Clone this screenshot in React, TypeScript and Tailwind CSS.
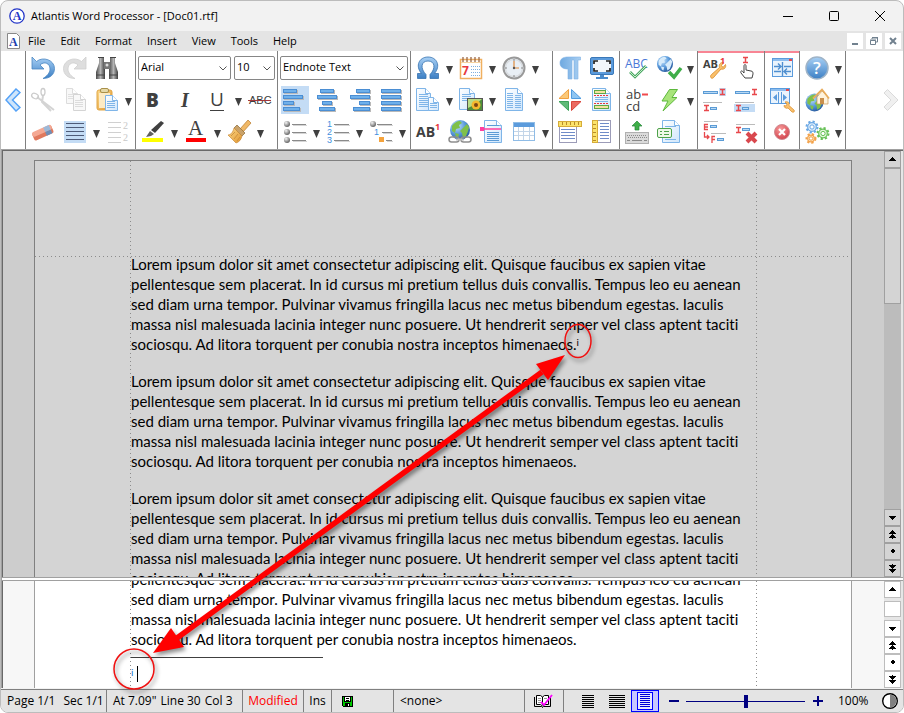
import type { ReactNode } from 'react';

const Icon = ({ children }: { children: ReactNode }) => (
  <svg viewBox="0 0 24 24" className="size-6 shrink-0 overflow-visible" fill="none" aria-hidden="true">
    {children}
  </svg>
);

// Shared gradients, referenced by id from the toolbar icons
const Gradients = () => (
  <svg className="absolute size-0" aria-hidden="true">
    <defs>
      <linearGradient id="blue" x1="0" y1="0" x2="0" y2="1">
        <stop offset="0" stopColor="#a8d0f5" />
        <stop offset="1" stopColor="#3c7fc4" />
      </linearGradient>
      <linearGradient id="sky" x1="0" y1="0" x2="1" y2="0">
        <stop offset="0" stopColor="#6fa9e0" />
        <stop offset="1" stopColor="#a9cff2" />
      </linearGradient>
      <linearGradient id="paper" x1="0" y1="0" x2="1" y2="1">
        <stop offset="0" stopColor="#ffffff" />
        <stop offset="1" stopColor="#cfe6fc" />
      </linearGradient>
      <linearGradient id="dark" x1="0" y1="0" x2="1" y2="0">
        <stop offset="0" stopColor="#4a4a4a" />
        <stop offset="0.5" stopColor="#b5b5b5" />
        <stop offset="1" stopColor="#3e3e3e" />
      </linearGradient>
      <linearGradient id="gold" x1="0" y1="0" x2="1" y2="1">
        <stop offset="0" stopColor="#fbd98a" />
        <stop offset="1" stopColor="#e2962f" />
      </linearGradient>
      <radialGradient id="globe" cx="0.35" cy="0.3" r="0.8">
        <stop offset="0" stopColor="#c7e4fb" />
        <stop offset="0.5" stopColor="#5b9bdc" />
        <stop offset="1" stopColor="#1f4f93" />
      </radialGradient>
      <radialGradient id="ball" cx="0.35" cy="0.3" r="0.7">
        <stop offset="0" stopColor="#f4f4f4" />
        <stop offset="1" stopColor="#666666" />
      </radialGradient>
      <radialGradient id="stop" cx="0.4" cy="0.3" r="0.8">
        <stop offset="0" stopColor="#f79a9a" />
        <stop offset="1" stopColor="#cf3a44" />
      </radialGradient>
    </defs>
  </svg>
);

const Tool = ({ label, active, children }: { label: string; active?: boolean; children: ReactNode }) => (
  <button type="button" aria-label={label} className="flex size-8 shrink-0 items-center justify-center">
    <span className={active ? 'flex size-7 items-center justify-center bg-[#c4dcf5]' : 'flex items-center justify-center'}>
      <Icon>{children}</Icon>
    </span>
  </button>
);

const More = ({ label }: { label: string }) => (
  <button type="button" aria-label={label} className="flex h-8 w-[11px] shrink-0 items-center justify-center">
    <svg viewBox="0 0 7 8" className="mt-1 h-2 w-[7px]" aria-hidden="true">
      <path d="M0 0h7L3.5 8z" fill="#404040" />
    </svg>
  </button>
);

const Group = ({ hot, children }: { hot?: boolean; children: ReactNode }) => (
  <div
    className={
      hot
        ? 'flex flex-col border-l border-[#808080] px-px py-px shadow-[inset_0_2px_0_#f88594]'
        : 'flex flex-col border-l border-[#808080] px-px py-px'
    }
  >
    {children}
  </div>
);

const Row = ({ children }: { children: ReactNode }) => <div className="flex h-8 items-center">{children}</div>;

const Combo = ({ label, value, className }: { label: string; value: string; className: string }) => (
  <label className={`relative flex h-6 ${className}`}>
    <select
      aria-label={label}
      className="w-full appearance-none rounded-[2px] border border-[#868686] bg-white pr-4 pl-[2px] text-[11px] text-black"
    >
      <option>{value}</option>
    </select>
    <svg viewBox="0 0 8 5" className="pointer-events-none absolute top-[10px] right-1 h-[5px] w-2" fill="none" aria-hidden="true">
      <path d="M0.5 0.5L4 4l3.5-3.5" stroke="#555" />
    </svg>
  </label>
);

/* ---------- icon drawings ---------- */

const Undo = ({ fill, stroke }: { fill: string; stroke: string }) => (
  <path d="M1 1v12h12l-4-4c4-4 10-2 10 4 0 4-3 7-7 9.5 7 0 11.5-4 11.5-10C23.5 4 12 0 5.5 5.5z" fill={fill} stroke={stroke} strokeWidth="0.8" />
);

const Sheet = ({ x = 1, y = 1, w = 16, h = 22, fill = 'url(#paper)', stroke = '#7fb5e8' }) => (
  <>
    <path d={`M${x} ${y}h${w - 5}l5 5v${h - 5}h-${w}z`} fill={fill} stroke={stroke} />
    <path d={`M${x + w - 5} ${y}v5h5`} fill="#fff" stroke={stroke} />
  </>
);

const Rules = ({ x, w, ys, color = '#7fb5e8' }: { x: number; w: number; ys: number[]; color?: string }) => (
  <path d={ys.map((y) => `M${x} ${y}h${w}`).join('')} stroke={color} />
);

const AlignBars = ({ bars }: { bars: [number, number][] }) => (
  <>
    {bars.map(([x, w], i) => (
      <g key={i}>
        <rect x={x + 1} y={i * 6 + 2} width={w} height="4" fill="#b9b9b9" />
        <rect x={x + 0.5} y={i * 6 + 1.5} width={w - 1} height="3" fill="#6fb0ea" stroke="#4b8ed3" />
      </g>
    ))}
  </>
);

const Globe = ({ x = 12, y = 12, r = 10, land = '#7fc04a' }) => (
  <g transform={`translate(${x} ${y}) scale(${r / 10})`}>
    <circle r="10" fill="url(#globe)" />
    <path d="M-8-4c2-3 5-5 8-5l2 2-3 2 1 3-4 1-1 4-3-2z" fill={land} />
    <path d="M3-2l4-4 2 3-1 4-2 5-3 2-1-5-2-2z" fill={land} />
    <path d="M-5 3l4 1-1 4-2-1z" fill={land} />
  </g>
);

const ListRule = ({ x, y }: { x: number; y: number }) => (
  <>
    <path d={`M${x} ${y + 0.5}H23`} stroke="#8a8a8a" />
    <path d={`M${x + 1} ${y + 1.5}H24`} stroke="#d5d5d5" />
  </>
);

const FieldBar = ({ x, y, w }: { x: number; y: number; w: number }) => (
  <rect x={x + 0.5} y={y + 0.5} width={w} height="2" fill="#b8d9f5" stroke="#5b9bd5" />
);

// Serif-style insertion mark used by the note icons
const Mark = ({ x, y }: { x: number; y: number }) => (
  <path d={`M${x} ${y + 0.5}h5m-5 5h5m-2.5-5v5`} stroke="#e8484c" strokeWidth="1.5" />
);

const Wrench = () => (
  <path
    d="M22.5 8.500c1 3-1.500 5.500-4.500 4.500l-7 8c-2 3-5 0-2.500-2.500l8-7c-1-3 1-5.500 4-5l-2 3 1.500 2z"
    fill="#f9c06c"
    stroke="#d98a28"
    strokeWidth="0.8"
  />
);

const Gear = ({ x, y, r, color, fill }: { x: number; y: number; r: number; color: string; fill: string }) => (
  <>
    <circle cx={x} cy={y} r={r} stroke={color} strokeWidth="2" strokeDasharray="2.2 2.1" />
    <circle cx={x} cy={y} r={r - 1.2} fill={fill} stroke={color} strokeWidth="1.2" />
    <circle cx={x} cy={y} r={r / 2.6} fill="#fff" stroke={color} />
  </>
);

/* ---------- toolbar ---------- */

const Toolbar = () => (
  <div className="flex shrink-0 border-b border-[#a0a0a0] bg-white">
    <button type="button" aria-label="Scroll toolbar left" className="flex w-6 items-center justify-center">
      <svg viewBox="0 0 16 24" className="h-6 w-4" aria-hidden="true">
        <path d="M11 1l4 3.500L7.500 12l7.500 7.500-4 3.500L1 12z" fill="#cfe5fb" stroke="#55a2f7" strokeWidth="1.5" />
      </svg>
    </button>

    <Group>
      <Row>
        <Tool label="Undo">
          <Undo fill="url(#blue)" stroke="#4a86c2" />
        </Tool>
        <Tool label="Redo">
          <g transform="matrix(-1 0 0 1 24 0)">
            <Undo fill="#dedede" stroke="#cfcfcf" />
          </g>
        </Tool>
        <Tool label="Find">
          <path d="M4 2h5v4l1 2v15H1v-7L4 7z" fill="url(#dark)" />
          <path d="M15 2h5v5l3 9v7h-9V8l1-2z" fill="url(#dark)" />
          <rect x="9" y="6" width="6" height="7" fill="#777" />
          <circle cx="12" cy="9" r="1.5" fill="#ddd" />
          <path d="M3 1.500h6M15 1.500h6M1 19h9M14 19h9" stroke="#444" />
        </Tool>
      </Row>
      <Row>
        <Tool label="Cut">
          <path d="M6 9l17 13M12 8l-1 6 9 9" stroke="#d4d4d4" strokeWidth="2" />
          <ellipse cx="4" cy="8" rx="3.500" ry="2.500" stroke="#cccccc" strokeWidth="1.3" transform="rotate(25 4 8)" />
          <ellipse cx="12" cy="4" rx="2" ry="3.500" stroke="#cccccc" strokeWidth="1.3" />
        </Tool>
        <Tool label="Copy">
          <Sheet x={3.5} y={0.5} w={11} h={15} fill="#f8f8f8" stroke="#dcdcdc" />
          <Rules x={5} w={7} ys={[6.5, 8.5, 10.5]} color="#e0e0e0" />
          <Sheet x={10.5} y={6.5} w={12} h={16} fill="#f8f8f8" stroke="#d4d4d4" />
          <Rules x={12} w={8} ys={[12.5, 14.5, 16.5, 18.5]} color="#dcdcdc" />
        </Tool>
        <Tool label="Paste">
          <rect x="2" y="2" width="15" height="20" rx="2" fill="url(#gold)" stroke="#e0a545" />
          <rect x="4" y="5" width="11" height="15" fill="#fdebc4" />
          <rect x="5.5" y="0.5" width="8" height="4" rx="1.5" fill="#e6d9a8" stroke="#a8904a" />
          <Sheet x={10.5} y={7.5} w={12} h={15} />
          <Rules x={12} w={8} ys={[13.5, 15.5, 17.5, 19.5]} />
        </Tool>
        <More label="Paste options" />
      </Row>
      <Row>
        <Tool label="Clear formatting">
          <g transform="rotate(-24 12 12)">
            <rect x="1" y="9" width="21" height="8" rx="2" fill="#e0795e" />
            <rect x="1" y="8" width="21" height="5" rx="2" fill="#f4a893" />
            <rect x="14" y="8" width="6" height="5" fill="#9db9d8" />
            <rect x="14" y="13" width="6" height="4" fill="#6f8fb8" />
          </g>
        </Tool>
        <Tool label="Paragraph">
          <rect x="1" y="1" width="22" height="22" fill="#c4dcf5" />
          <path d="M3 3.500h18M3 7.500h18M3 11.500h18M3 15.500h18M3 19.500h18" stroke="#4e5b78" />
        </Tool>
        <More label="Paragraph options" />
        <Tool label="Line numbers">
          <path d="M2 2.500h13M2 7.500h13M2 12.500h13M2 17.500h13M2 22.500h13" stroke="#d0d0d0" />
          <text x="17" y="9" fontSize="10" fill="#c8c8c8" fontFamily="Liberation Serif, serif">2</text>
          <text x="17" y="21" fontSize="10" fill="#c8c8c8" fontFamily="Liberation Serif, serif">2</text>
        </Tool>
      </Row>
    </Group>

    <Group>
      <Row>
        <div className="flex gap-[3px] px-px pb-px">
          <Combo label="Font" value="Arial" className="w-[93px]" />
          <Combo label="Font size" value="10" className="w-[41px]" />
        </div>
      </Row>
      <Row>
        <Tool label="Bold">
          <text x="5" y="19" fontSize="19" fontWeight="800" fill="#404040" fontFamily="Open Sans, sans-serif">B</text>
        </Tool>
        <Tool label="Italic">
          <text x="8" y="19" fontSize="20" fontStyle="italic" fontWeight="700" fill="#404040" fontFamily="Liberation Serif, serif">I</text>
        </Tool>
        <Tool label="Underline">
          <text x="5" y="18" fontSize="19" fill="#404040" fontFamily="Open Sans, sans-serif">U</text>
          <path d="M5 22.500h14" stroke="#404040" />
        </Tool>
        <More label="Underline options" />
        <Tool label="Strikethrough">
          <text x="1" y="16" fontSize="11" fill="#404040" fontFamily="Liberation Sans, sans-serif">ABC</text>
          <path d="M0 12.500h23" stroke="#a4373a" />
        </Tool>
      </Row>
      <Row>
        <Tool label="Highlight">
          <path d="M20 1l3 2-9 10-4-3z" fill="#404040" />
          <path d="M9 11l4 3-3 2-5 1z" fill="#606060" />
          <rect x="1" y="18" width="21" height="4" fill="#ffff00" />
        </Tool>
        <More label="Highlight colors" />
        <Tool label="Font color">
          <text x="4" y="15" fontSize="21" fill="#404040" fontFamily="Liberation Serif, serif">A</text>
          <rect x="2" y="18" width="20" height="4" fill="#ff0000" />
        </Tool>
        <More label="Font colors" />
        <Tool label="Format painter">
          <path d="M21 0l3 3-8 9-3-3z" fill="#f0b866" stroke="#b87a2c" strokeWidth="0.7" />
          <path d="M10 5l8 8-3 3-8-8z" fill="#c9a26a" stroke="#8a6a3a" strokeWidth="0.7" />
          <path d="M7 8l8 8c-1 4-3 6-6 7l-8-8c3 0 5-3 6-7z" fill="url(#gold)" stroke="#c98a38" strokeWidth="0.7" />
          <path d="M8 12l-4 4M11 14l-4 5M13 17l-3 4" stroke="#c98a38" strokeWidth="0.8" />
        </Tool>
        <More label="Format painter options" />
      </Row>
    </Group>

    <Group>
      <Row>
        <div className="flex px-px pb-px">
          <Combo label="Style" value="Endnote Text" className="w-[128px]" />
        </div>
      </Row>
      <Row>
        <Tool label="Align left" active>
          <AlignBars bars={[[0, 14], [0, 20], [0, 11], [0, 17]]} />
        </Tool>
        <Tool label="Center">
          <AlignBars bars={[[5, 14], [2, 20], [7, 10], [4, 16]]} />
        </Tool>
        <Tool label="Align right">
          <AlignBars bars={[[9, 14], [3, 20], [12, 11], [6, 17]]} />
        </Tool>
        <Tool label="Justify">
          <AlignBars bars={[[2, 20], [2, 20], [2, 20], [2, 20]]} />
        </Tool>
      </Row>
      <Row>
        <Tool label="Bulleted list">
          {[4, 12, 20].map((y) => (
            <g key={y}>
              <circle cx="4" cy={y} r="3" fill="url(#ball)" />
              <ListRule x={9} y={y} />
            </g>
          ))}
        </Tool>
        <More label="Bullet options" />
        <Tool label="Numbered list">
          {['1', '2', '3'].map((n, i) => (
            <g key={n}>
              <text x="1" y={i * 8 + 7} fontSize="9" fill="#3f8fde" fontFamily="Liberation Sans, sans-serif">{n}</text>
              <ListRule x={8} y={i * 8 + 4} />
            </g>
          ))}
        </Tool>
        <More label="Numbering options" />
        <Tool label="Multilevel list">
          <circle cx="4" cy="4" r="3" fill="url(#ball)" />
          <ListRule x={8} y={4} />
          <ListRule x={13} y={12} />
          <ListRule x={17} y={20} />
          <text x="5" y="15" fontSize="9" fill="#3f8fde" fontFamily="Liberation Sans, sans-serif">1</text>
          <rect x="10" y="17" width="5" height="5" fill="#f5a33c" />
        </Tool>
        <More label="Multilevel options" />
      </Row>
    </Group>

    <Group>
      <Row>
        <Tool label="Symbol">
          <path
            d="M1.500 22.500v-5h4C-1 10 3 1 12 1s13 9 6.500 16.500h4v5h-8.500v-4c6-6 5-13.500-2-13.500s-8 7.500-2 13.500v4z"
            fill="url(#blue)"
            stroke="#3672b0"
            strokeWidth="0.8"
          />
        </Tool>
        <More label="Symbol options" />
        <Tool label="Date">
          <rect x="1.5" y="3.5" width="21" height="19" fill="#fff" stroke="#f0b060" strokeWidth="1.5" />
          <path d="M2 6.500h20" stroke="#f6d3a0" />
          <path d="M4 1v5M8 1v5M12 1v5M16 1v5M20 1v5" stroke="#9a6848" strokeWidth="1.3" />
          <text x="3" y="19" fontSize="12" fontWeight="700" fill="#e8383d" fontFamily="Open Sans, sans-serif">7</text>
          <path d="M12 10.500h9M12 13.500h9M12 16.500h9M12 19.500h9" stroke="#7fb0e0" strokeDasharray="1 1" />
        </Tool>
        <More label="Date options" />
        <Tool label="Time">
          <circle cx="12" cy="12" r="10.5" fill="#e4eaf0" stroke="#999" strokeWidth="2" />
          <circle cx="12" cy="12" r="8.5" fill="#e9eff5" stroke="#cfcfcf" strokeWidth="0.7" />
          <path d="M12 5v7h5" stroke="#e08a3c" strokeWidth="1.2" />
          <circle cx="12" cy="12" r="1.2" fill="#555" />
          <path d="M12 3v2M12 19v2M3 12h2M19 12h2" stroke="#888" />
        </Tool>
        <More label="Time options" />
      </Row>
      <Row>
        <Tool label="New document">
          <Sheet x={0.5} y={0.5} w={14} h={22} />
          <Rules x={3} w={9} ys={[6.5, 8.5, 10.5, 12.5, 14.5, 16.5, 18.5]} />
          <Sheet x={12.5} y={9.5} w={10} h={13} />
          <Rules x={14} w={7} ys={[15.5, 17.5, 19.5]} />
        </Tool>
        <More label="Document options" />
        <Tool label="Picture">
          <Sheet x={0.5} y={0.5} w={15} h={21} />
          <Rules x={3} w={9} ys={[6.5, 8.5, 10.5, 12.5]} />
          <rect x="8.5" y="10.5" width="15" height="12" fill="#4f8f3a" stroke="#555" />
          <path d="M9 11h14l-6 5-8 4z" fill="#b8dc86" />
          <circle cx="17" cy="17" r="4.5" fill="#f4b92d" />
          <circle cx="17" cy="17" r="2" fill="#7a4512" />
        </Tool>
        <More label="Picture options" />
        <Tool label="Columns">
          <Sheet x={3.5} y={0.5} w={17} h={22} />
          <Rules x={5} w={6} ys={[5.5, 7.5, 9.5, 11.5, 13.5, 15.5, 17.5, 19.5]} />
          <Rules x={13} w={6} ys={[7.5, 9.5, 11.5, 13.5, 15.5, 17.5, 19.5]} />
        </Tool>
        <More label="Column options" />
      </Row>
      <Row>
        <Tool label="Footnote">
          <text x="0" y="17" fontSize="14" fontWeight="700" fill="#404040" fontFamily="Open Sans, sans-serif">AB</text>
          <text x="19" y="10" fontSize="9" fontWeight="700" fill="#e8383d" fontFamily="Open Sans, sans-serif">1</text>
        </Tool>
        <Tool label="Hyperlink">
          <Globe x={12} y={10} r={10} />
          <rect x="1" y="17" width="10" height="5" rx="2.5" stroke="#8e8e8e" strokeWidth="1.5" />
          <rect x="13" y="17" width="10" height="5" rx="2.5" stroke="#8e8e8e" strokeWidth="1.5" />
          <path d="M8 19.500h8" stroke="#bdbdbd" strokeWidth="2" />
        </Tool>
        <Tool label="Bookmark">
          <Sheet x={4.5} y={0.5} w={17} h={22} />
          <Rules x={7} w={12} ys={[5.5, 12.5, 14.5, 16.5, 18.5, 20.5]} color="#5b9bd5" />
          <rect x="0" y="7" width="4" height="4" fill="#ff3fa0" />
          <path d="M4 9h17" stroke="#ff3fa0" strokeWidth="1.3" />
        </Tool>
        <Tool label="Table">
          <rect x="1.5" y="2.5" width="21" height="18" fill="#fff" stroke="#8fbce6" />
          <rect x="2" y="3" width="20" height="4" fill="#5b9bdc" />
          <path d="M2 11.500h20M2 15.500h20M6.500 7v13M11.500 7v13M17.500 7v13" stroke="#c3d5e8" />
        </Tool>
        <More label="Table options" />
      </Row>
    </Group>

    <Group>
      <Row>
        <Tool label="Formatting marks">
          <path d="M22.500 1v3H20v19h-4V4h-2v19h-4V13C5 13 2 11 2 7s3-6 8-6z" fill="url(#sky)" stroke="#7fb2e6" strokeWidth="0.6" />
        </Tool>
        <Tool label="Full screen">
          <rect x="0.5" y="1.5" width="23" height="17" rx="1.5" fill="#5b9bdc" stroke="#3a78b8" />
          <rect x="3" y="4" width="18" height="12" fill="#f2f6fa" />
          <path d="M4 8V5h4M16 5h4v3M20 12v3h-4M8 15H4v-3" stroke="#222" strokeWidth="1.7" />
          <path d="M10 19h4v2h4v2H6v-2h4z" fill="#4a8bcc" />
        </Tool>
      </Row>
      <Row>
        <Tool label="Control board">
          <path d="M10.500 1.500v9H1z" fill="#fbc878" stroke="#f0a040" />
          <path d="M13.500 1.500v9H23z" fill="#8ec5f2" stroke="#4f9be0" />
          <path d="M10.500 22.500v-9H1z" fill="#5fba78" stroke="#3da35a" />
          <path d="M13.500 22.500v-9H23z" fill="#ea6a60" stroke="#d9473c" />
        </Tool>
        <Tool label="Headers and footers">
          <Sheet x={2.5} y={0.5} w={18} h={22} />
          <rect x="4.5" y="2.5" width="11" height="3" fill="#f4e2a0" stroke="#5fa845" />
          <path d="M4 7.500h15M4 15.500h15" stroke="#e8383d" strokeDasharray="2 1" />
          <rect x="4.5" y="17.5" width="14" height="3" fill="#f4e2a0" stroke="#5fa845" />
          <Rules x={5} w={13} ys={[9.5, 11.5, 13.5]} />
        </Tool>
      </Row>
      <Row>
        <Tool label="Horizontal ruler">
          <rect x="1.5" y="6.5" width="17" height="16" fill="#fff" stroke="#9c9cb8" />
          <Rules x={3} w={14} ys={[9.5, 12.5, 15.5, 18.5]} color="#6f8cc8" />
          <rect x="0.5" y="1.5" width="23" height="5" fill="#fbe36b" stroke="#d6ac38" />
          <path d="M4.500 2v3M8.500 2v3M12.500 2v3M16.500 2v3M20.500 2v3" stroke="#b88a28" />
        </Tool>
        <Tool label="Vertical ruler">
          <rect x="7.5" y="0.5" width="13" height="22" fill="#fff" stroke="#9c9cb8" />
          <Rules x={10} w={9} ys={[3.5, 6.5, 9.5, 12.5, 15.5, 18.5]} color="#6f8cc8" />
          <rect x="2.5" y="0.5" width="5" height="22" fill="#fbe36b" stroke="#d6ac38" />
          <path d="M3 4.500h3M3 8.500h3M3 12.500h3M3 16.500h3M3 20.500h3" stroke="#b88a28" />
        </Tool>
      </Row>
    </Group>

    <Group>
      <Row>
        <Tool label="Spelling">
          <text x="0" y="12" fontSize="12" fill="#4a78d8" fontFamily="Open Sans, sans-serif">ABC</text>
          <path d="M5 16l5 5 11-11" stroke="#4ca866" strokeWidth="2.6" />
          <path d="M5 16l5 5 11-11" stroke="#c8ecc8" />
        </Tool>
        <Tool label="Online check">
          <Globe x={8} y={8} r={8} land="#d6ebfb" />
          <path d="M12 16l5 5 7-9" stroke="#3fae49" strokeWidth="3.5" />
        </Tool>
        <More label="Language options" />
      </Row>
      <Row>
        <Tool label="Hyphenation">
          <text x="1" y="11" fontSize="13" fill="#404040" fontFamily="Open Sans, sans-serif">ab</text>
          <path d="M17 6.500h6" stroke="#f04a4e" strokeWidth="2" />
          <text x="1" y="23" fontSize="13" fill="#404040" fontFamily="Open Sans, sans-serif">cd</text>
        </Tool>
        <Tool label="AutoCorrect">
          <path d="M12.500 1.500h8l-5.500 8h5L6 23l5-10H5z" fill="#a8e47a" stroke="#5db83c" />
        </Tool>
        <More label="AutoCorrect options" />
      </Row>
      <Row>
        <Tool label="Keyboard">
          <path d="M12 1l5 5h-3v4h-4V6H7z" fill="#3fae49" stroke="#26873a" strokeWidth="0.7" />
          <rect x="0.5" y="12.5" width="23" height="11" fill="#dadada" stroke="#b0b0b0" />
          <path d="M2 15.500h20M3 17.500h19" stroke="#8a8a8a" strokeDasharray="1 1" />
          <path d="M2 20.500h3M7 20.500h10M19 20.500h3" stroke="#8a8a8a" />
        </Tool>
        <Tool label="Clip library">
          <Sheet x={5.5} y={0.5} w={17} h={22} />
          <Rules x={8} w={11} ys={[6.5, 19.5]} />
          <rect x="0.5" y="8.5" width="14" height="9" rx="1.5" fill="#eef8e8" stroke="#4da24a" />
          <path d="M3 11.500h2m2 0h5M3 14.500h2m2 0h5" stroke="#4da24a" />
        </Tool>
      </Row>
    </Group>

    <Group hot>
      <Row>
        <Tool label="Note options">
          <Wrench />
          <text x="0" y="12" fontSize="11" fontWeight="700" fill="#404040" fontFamily="Open Sans, sans-serif">AB</text>
          <text x="17" y="8" fontSize="9" fontWeight="700" fill="#e8383d" fontFamily="Open Sans, sans-serif">1</text>
        </Tool>
        <Tool label="Go to note">
          <Mark x={8} y={1} />
          <path d="M10 22l-4-5c-1-2 1-3 2-1l1 1v-7c0-2 2-2 2 0v4l5 1c2 0 2 2 2 3l-1 4z" fill="#fff" stroke="#444" />
        </Tool>
      </Row>
      <Row>
        <Tool label="Select note reference">
          <rect x="16" y="0" width="7" height="8" fill="#c4dcf5" />
          <FieldBar x={0} y={3} w={14} />
          <Mark x={17} y={1} />
          <path d="M0 14.500h19" stroke="#bbb" />
          <Mark x={1} y={17} />
          <FieldBar x={7} y={19} w={6} />
        </Tool>
        <Tool label="Select note text">
          <FieldBar x={0} y={3} w={14} />
          <Mark x={17} y={1} />
          <path d="M0 14.500h19" stroke="#bbb" />
          <rect x="-1" y="16" width="21" height="8" fill="#c4dcf5" />
          <Mark x={1} y={17} />
          <FieldBar x={7} y={19} w={6} />
        </Tool>
      </Row>
      <Row>
        <Tool label="Convert note">
          <path d="M1 1.500h14M8 13.500h15" stroke="#bbb" />
          <path d="M5 4.500H1.500v5H5M1.500 7H5M1.500 12v5h4M4 15l2 2-2 2M12 16.500H9V23M9 19.500h3" stroke="#e8484c" strokeWidth="1.3" />
          <FieldBar x={7} y={5} w={6} />
          <FieldBar x={14} y={18} w={6} />
        </Tool>
        <Tool label="Delete note">
          <path d="M1 4.500h19" stroke="#bbb" />
          <Mark x={1} y={7} />
          <FieldBar x={7} y={8} w={7} />
          <path d="M12 13l9 9M21 13l-9 9" stroke="#d9484e" strokeWidth="4" />
        </Tool>
      </Row>
    </Group>

    <Group hot>
      <Row>
        <Tool label="Fit window">
          <rect x="2.5" y="2.5" width="20" height="18" fill="#eaf4fd" stroke="#5b9bdc" />
          <rect x="3" y="3" width="19" height="2" fill="#8cbdee" />
          <rect x="19" y="3" width="3" height="2" fill="#e8484c" />
          <path d="M12.500 6v14M4 10.500h7M14 10.500h7M4 15.500h7M14 15.500h7M8 7.500l3 3-3 3M17 12.500l-3 3 3 3" stroke="#4f8fd0" strokeWidth="1.4" />
        </Tool>
      </Row>
      <Row>
        <Tool label="Window setup">
          <rect x="0.5" y="0.5" width="19" height="15" fill="#eaf4fd" stroke="#5b9bdc" />
          <rect x="1" y="1" width="18" height="2" fill="#8cbdee" />
          <rect x="16" y="1" width="3" height="2" fill="#e8484c" />
          <path d="M8.500 4v11M11.500 4v11" stroke="#5b9bdc" />
          <path d="M7 6L3 9.500 7 13zM13 6l4 3.500-4 3.500z" fill="#5b9bdc" />
          <path d="M24 22l-5-4.500c1-3-1.500-4.500-4-3.500l2 2-1 2-2-.5c0 2 2 3.500 4 2.500l4 4c2 1 3-1 2-2z" fill="#f9c06c" stroke="#d98a28" strokeWidth="0.7" />
        </Tool>
      </Row>
      <Row>
        <Tool label="Close">
          <circle cx="12" cy="12" r="7.5" fill="url(#stop)" stroke="#d08a90" />
          <path d="M9 9l6 6M15 9l-6 6" stroke="#fff" strokeWidth="2.2" />
        </Tool>
      </Row>
    </Group>

    <Group>
      <Row>
        <Tool label="Help">
          <circle cx="12" cy="12" r="11" fill="url(#blue)" stroke="#9fb4c8" strokeWidth="1.5" />
          <text x="8" y="18" fontSize="17" fontWeight="600" fill="#fff" fontFamily="Open Sans, sans-serif">?</text>
        </Tool>
        <More label="Help options" />
      </Row>
      <Row>
        <Tool label="Home page">
          <Globe x={9.5} y={14.5} r={9} />
          <path d="M12 9l5-6 6 6v7H12z" fill="#fff3dc" stroke="#c79a5a" strokeWidth="0.7" />
          <path d="M8 10.500l9-9 7 9" stroke="#e8ac5c" strokeWidth="1.8" />
          <rect x="15" y="10" width="4" height="6" fill="#c98f4c" />
        </Tool>
        <More label="Home page options" />
      </Row>
      <Row>
        <Tool label="Options">
          <Gear x={7} y={7} r={5.5} color="#6ba8e4" fill="#e0effc" />
          <Gear x={18} y={13.5} r={5.5} color="#66c056" fill="#e2f6da" />
          <Gear x={6} y={18.5} r={4.5} color="#f3a24a" fill="#fdeacb" />
        </Tool>
        <More label="More options" />
      </Row>
    </Group>

    <div className="flex flex-1 items-center justify-end border-l border-[#808080]">
      <button type="button" aria-label="Scroll toolbar right" className="flex w-5 items-center">
        <svg viewBox="0 0 16 24" className="h-6 w-4" aria-hidden="true">
          <path d="M4.500 1.500L1 5l7 7-7 7 3.500 3.500L15 12z" fill="#f0f0f0" stroke="#dadada" />
        </svg>
      </button>
    </div>
  </div>
);

/* ---------- document ---------- */

const lines = [
  'Lorem ipsum dolor sit amet consectetur adipiscing elit. Quisque faucibus ex sapien vitae',
  'pellentesque sem placerat. In id cursus mi pretium tellus duis convallis. Tempus leo eu aenean',
  'sed diam urna tempor. Pulvinar vivamus fringilla lacus nec metus bibendum egestas. Iaculis',
  'massa nisl malesuada lacinia integer nunc posuere. Ut hendrerit semper vel class aptent taciti',
  'sociosqu. Ad litora torquent per conubia nostra inceptos himenaeos.',
];

const Paragraph = ({ from = 0, note }: { from?: number; note?: boolean }) => (
  <p>
    {lines.slice(from).map((line, i, all) => (
      <span key={line} className="block whitespace-nowrap">
        {line}
        {note && i === all.length - 1 && <sup className="-top-1 text-[10px] leading-none">i</sup>}
      </span>
    ))}
  </p>
);

const Guides = ({ top }: { top?: boolean }) => (
  <>
    {top && (
      <div className="absolute inset-x-0 top-[95px] h-px bg-[repeating-linear-gradient(to_right,#8c8c8c_0_1px,transparent_1px_4px)]" />
    )}
    <div className="absolute inset-y-0 left-[95px] w-px bg-[repeating-linear-gradient(to_bottom,#8c8c8c_0_1px,transparent_1px_4px)]" />
    <div className="absolute inset-y-0 right-[94px] w-px bg-[repeating-linear-gradient(to_bottom,#8c8c8c_0_1px,transparent_1px_4px)]" />
  </>
);

const glyphs = {
  up: 'M5 3h1v1h1v1h1v1h1v1H2V6h1V5h1V4h1z',
  down: 'M2 4h7v1H8v1H7v1H6v1H5V7H4V6H3V5H2z',
  pageUp: 'M5 1h1v1h1v1h1v1h1v1H6v1h1v1h1v1h1v1H6v1H5V9H2V8h1V7h1V6h1V5H2V4h1V3h1V2h1z',
  pageDown: 'M5 10h1V9h1V8h1V7h1V6H6V5h1V4h1V3h1V2H6V1H5v1H2v1h1v1h1v1h1v1H2v1h1v1h1v1h1z',
  dot: 'M4 4h1V3h2v1h1v2H7v1H5V6H4z',
};

const ScrollButton = ({ label, glyph, dim }: { label: string; glyph: keyof typeof glyphs; dim?: boolean }) => (
  <button
    type="button"
    aria-label={label}
    className={
      dim
        ? 'flex h-[17px] w-full shrink-0 items-center justify-center border border-[#a0a0a0] bg-[#d4d4d4]'
        : 'flex h-[17px] w-full shrink-0 items-center justify-center border border-[#bdbdbd] bg-white'
    }
  >
    <svg viewBox="0 0 11 11" className="size-[11px]" shapeRendering="crispEdges" aria-hidden="true">
      <path d={glyphs[glyph]} fill="#000" />
    </svg>
  </button>
);

// Double-headed arrow tying the note mark to its endnote
const Annotation = () => (
  <svg
    viewBox="0 0 500 380"
    className="pointer-events-none absolute top-[166px] left-[108px] h-[380px] w-[500px] drop-shadow-[2px_3px_2px_rgba(0,0,0,0.45)]"
    fill="none"
    aria-hidden="true"
  >
    <ellipse cx="468" cy="25" rx="13" ry="16.5" stroke="#f01010" strokeWidth="1.5" />
    <circle cx="24" cy="353" r="20" stroke="#f01010" strokeWidth="1.5" />
    <path d="M67 322L432 56" stroke="#ff0000" strokeWidth="5.5" />
    <path d="M455 39l-29 9 12 16z" fill="#ff0000" />
    <path d="M43 337l18-25 13 19z" fill="#ff0000" />
  </svg>
);

const Workspace = () => (
  <div className="relative flex min-h-0 flex-1 flex-col border-l border-[#a0a0a0] font-['Lato','Carlito','Liberation_Sans',sans-serif] text-[15px] leading-5 text-black [font-variant-ligatures:none]">
    <section aria-label="Document" className="flex min-h-0 flex-1 border-t border-l border-[#696969] bg-[#cdcdcd]">
      <div className="flex min-w-0 flex-1 overflow-hidden pt-[9px] pr-px">
        <div className="relative mx-auto w-[818px] border-x border-t border-[#808080] bg-[#d4d4d4]">
          <div className="flex flex-col gap-[17px] pt-[93px] pl-24">
            <Paragraph note />
            <Paragraph />
            <Paragraph />
          </div>
          <Guides top />
        </div>
      </div>
      <div className="flex w-[17px] flex-col bg-[#bcbcbc]">
        <ScrollButton label="Scroll up" glyph="up" dim />
        <div className="h-[136px] w-full border border-[#a0a0a0] bg-[#d4d4d4]" />
        <div className="flex-1" />
        <ScrollButton label="Scroll down" glyph="down" dim />
        <ScrollButton label="Previous page" glyph="pageUp" dim />
        <ScrollButton label="Browse object" glyph="dot" dim />
        <ScrollButton label="Next page" glyph="pageDown" dim />
      </div>
      <div className="w-[2px] bg-[#e6e6e6]" />
    </section>

    <div className="h-1 shrink-0 border-y border-[#a0a0a0] bg-white" />

    <section aria-label="Endnotes" className="flex h-[107px] shrink-0 border-l border-[#696969] bg-[#f7f7f7]">
      <div className="flex min-w-0 flex-1 overflow-hidden pr-px">
        <div className="relative mx-auto w-[818px] border-x border-[#a0a0a0] bg-white">
          <div className="-mt-3 pl-24">
            <Paragraph from={1} />
            <div className="mt-2 h-px w-48 bg-[#404040]" />
            <div className="mt-2 flex items-center">
              <sup className="-top-[2px] text-[10px] leading-none text-[#1976d2]">i</sup>
              <span className="ml-1 h-4 w-px bg-black" />
            </div>
          </div>
          <Guides />
        </div>
      </div>
      <div className="flex w-[17px] flex-col bg-[#e6e6e6]">
        <ScrollButton label="Scroll up" glyph="up" />
        <div className="my-[3px] flex-1 border border-[#bdbdbd] bg-white" />
        <ScrollButton label="Scroll down" glyph="down" />
        <ScrollButton label="Previous page" glyph="pageUp" />
        <ScrollButton label="Browse object" glyph="dot" />
        <ScrollButton label="Next page" glyph="pageDown" />
      </div>
      <div className="w-[2px] bg-[#e6e6e6]" />
    </section>
    <Annotation />
  </div>
);

/* ---------- status bar ---------- */

const StatusBar = () => (
  <footer className="mt-px flex h-[23px] shrink-0 items-center border-t border-[#808080] bg-[#e4e4e4] text-[12px] text-black">
    <div className="flex h-full w-[105px] items-center gap-2 pl-[6px] whitespace-nowrap">
      <span>Page 1/1</span>
      <span>Sec 1/1</span>
    </div>
    <div className="flex h-full w-[136px] items-center gap-1 border-l border-[#808080] pl-[6px] whitespace-nowrap">
      <span>At 7.09"</span>
      <span>Line 30</span>
      <span>Col 3</span>
    </div>
    <div className="flex h-full w-[61px] items-center justify-center border-l border-[#808080] text-[#ff0000]">Modified</div>
    <div className="flex h-full w-7 items-center justify-center border-l border-[#808080]">Ins</div>
    <div className="flex h-full w-[62px] items-center border-l border-[#808080] pl-[10px]">
      <svg viewBox="0 0 11 11" className="size-[11px]" shapeRendering="crispEdges" aria-label="Saved">
        <path d="M0 0h11v11H1L0 10z" fill="#000" />
        <path d="M1 1h1v5h7V1h1v9H8V7H3v3H1z" fill="#00c800" />
        <path d="M3 1h5v4H3zM6 8h1v2H6z" fill="#fff" />
        <path d="M4 2h3M4 4h3" stroke="#000" />
      </svg>
    </div>
    <div className="flex h-full w-[131px] items-center border-l border-[#808080] pl-[6px]">&lt;none&gt;</div>
    <div className="flex h-full w-[39px] items-center border-l border-[#808080] pl-2">
      <svg viewBox="0 0 20 14" className="h-[14px] w-5" fill="none" aria-label="Spell check">
        <path d="M1.500 3v9.500h7l1 1 1-1h7V3" stroke="#000" />
        <path d="M3.500 1.500h4l2 1.500 2-1.500h4v9h-4l-2 1.500-2-1.500h-4z" fill="#fff" stroke="#000" />
        <path d="M9.500 3v8" stroke="#000" />
        <path d="M5 4.500h3M5 6.500h3M5 8.500h3M11 4.500h3" stroke="#999" />
        <path d="M8 8l3 3 8-10" stroke="#ff00ff" strokeWidth="1.8" />
      </svg>
    </div>
    <div className="flex h-full flex-1 items-center border-l border-[#808080] pr-[5px]">
      <button type="button" aria-label="Draft view" className="ml-[18px]">
        <svg viewBox="0 0 13 14" className="h-[14px] w-[13px]" shapeRendering="crispEdges" aria-hidden="true">
          <path d="M0 1.500h12M0 3.500h12M0 5.500h12M0 7.500h12M0 9.500h12M0 11.500h12M0 13.500h12" stroke="#000" />
        </svg>
      </button>
      <button type="button" aria-label="Online view" className="ml-[14px]">
        <svg viewBox="0 0 16 14" className="h-[14px] w-4" shapeRendering="crispEdges" aria-hidden="true">
          <path d="M0 1.500h16M0 3.500h16M0 5.500h16M0 7.500h16M0 9.500h16M0 11.500h16M0 13.500h16" stroke="#000" />
        </svg>
      </button>
      <button
        type="button"
        aria-label="Print layout"
        className="ml-[6px] flex h-[22px] w-7 items-center justify-center border border-[#0000ff] bg-[#c8c8ff]"
      >
        <svg viewBox="0 0 16 18" className="h-[18px] w-4" shapeRendering="crispEdges" aria-hidden="true">
          <path d="M0.500 0.500h15v17h-15z" fill="#e8e8ff" stroke="#0000ff" />
          <path d="M3 2.500h10M3 4.500h10M3 6.500h10M3 8.500h10M3 10.500h10M3 12.500h10M3 14.500h10" stroke="#0000d8" />
        </svg>
      </button>
      <button type="button" aria-label="Zoom out" className="ml-[10px]">
        <svg viewBox="0 0 10 10" className="size-[10px]" aria-hidden="true">
          <path d="M0 5h10" stroke="#000080" strokeWidth="2" />
        </svg>
      </button>
      <input
        type="range"
        aria-label="Zoom"
        defaultValue={50}
        className="ml-[7px] h-[13px] w-[119px] appearance-none bg-[linear-gradient(#000080,#000080)] bg-[length:100%_1px] bg-center bg-no-repeat [&::-webkit-slider-thumb]:h-[13px] [&::-webkit-slider-thumb]:w-1 [&::-webkit-slider-thumb]:appearance-none [&::-webkit-slider-thumb]:bg-[#000080]"
      />
      <button type="button" aria-label="Zoom in" className="ml-2">
        <svg viewBox="0 0 10 10" className="size-[10px]" aria-hidden="true">
          <path d="M0 5h10M5 0v10" stroke="#000080" strokeWidth="2" />
        </svg>
      </button>
      <span className="ml-[15px]">100%</span>
      <button type="button" aria-label="Contrast" className="ml-auto">
        <svg viewBox="0 0 16 16" className="size-4" aria-hidden="true">
          <circle cx="8" cy="8" r="7.3" fill="#fff" stroke="#000" strokeWidth="1.4" />
          <path d="M8 1.500a6.500 6.500 0 0 1 0 13z" fill="#808080" />
        </svg>
      </button>
    </div>
  </footer>
);

const menus = ['File', 'Edit', 'Format', 'Insert', 'View', 'Tools', 'Help'];

export default function App() {
  return (
    <div className="flex h-screen flex-col overflow-hidden rounded-lg border border-[#bcbcbc] bg-[#f2f2f2] font-['Open_Sans','Noto_Sans',sans-serif] text-[11px] text-black">
      <Gradients />

      <header className="flex h-[30px] shrink-0 items-center pl-2">
        <svg viewBox="0 0 16 16" className="size-4" fill="none" aria-hidden="true">
          <circle cx="8" cy="8" r="7.2" fill="#fff" stroke="#2436c8" strokeWidth="1.3" />
          <text x="3.7" y="12" fontSize="12" fontWeight="700" fill="#2436c8" fontFamily="Liberation Serif, serif">A</text>
        </svg>
        <h1 className="ml-[6px]">Atlantis Word Processor - [Doc01.rtf]</h1>
        <div className="ml-auto flex h-full">
          <button type="button" aria-label="Minimize" className="flex w-[46px] items-center justify-center">
            <svg viewBox="0 0 10 10" className="size-[10px]"><path d="M0 5.500h10" stroke="#000" /></svg>
          </button>
          <button type="button" aria-label="Maximize" className="flex w-[46px] items-center justify-center">
            <svg viewBox="0 0 10 10" className="size-[10px]" fill="none"><rect x="0.5" y="0.5" width="9" height="9" rx="1" stroke="#000" /></svg>
          </button>
          <button type="button" aria-label="Close" className="flex w-[46px] items-center justify-center">
            <svg viewBox="0 0 10 10" className="size-[10px]"><path d="M0 0l10 10M10 0L0 10" stroke="#000" /></svg>
          </button>
        </div>
      </header>

      <nav aria-label="Main menu" className="flex h-5 shrink-0 items-center bg-[#e4e4e4] pl-[6px]">
        <svg viewBox="0 0 13 16" className="h-4 w-[13px]" fill="none" aria-hidden="true">
          <path d="M0.500 0.500h9l3 3v12h-12z" fill="#fff" stroke="#888" />
          <text x="2" y="12.5" fontSize="12" fontWeight="700" fill="#1c3fae" fontFamily="Liberation Serif, serif">A</text>
        </svg>
        <div className="ml-2 flex gap-[15px]">
          {menus.map((menu) => (
            <button key={menu} type="button">{menu}</button>
          ))}
        </div>
        <div className="ml-auto flex gap-[3px] pr-[2px]">
          <button type="button" aria-label="Minimize document" className="flex size-4 items-end justify-center bg-white pb-1">
            <span className="h-[2px] w-[6px] bg-[#71818f]" />
          </button>
          <button type="button" aria-label="Restore document" className="flex size-4 items-center justify-center bg-white">
            <svg viewBox="0 0 8 8" className="size-2" fill="none"><path d="M2 2V1h5.500v4H6M2 0.500h6M0.500 3.500h5v4h-5zM0 3h6" stroke="#71818f" /></svg>
          </button>
          <button type="button" aria-label="Close document" className="flex size-4 items-center justify-center bg-white">
            <svg viewBox="0 0 8 8" className="size-2"><path d="M1 1l6 6M7 1L1 7" stroke="#71818f" strokeWidth="2" /></svg>
          </button>
        </div>
      </nav>

      <Toolbar />
      <Workspace />
      <StatusBar />
    </div>
  );
}
